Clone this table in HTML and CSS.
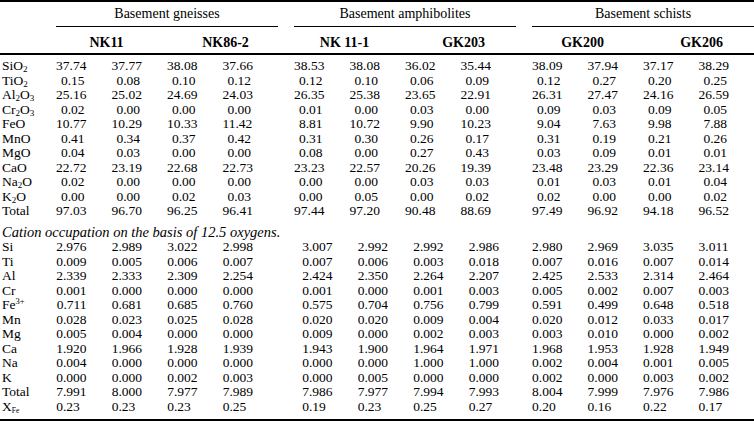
FILE: index.html
```html
<!DOCTYPE html>
<html>
<head>
<meta charset="utf-8">
<link rel="stylesheet" href="styles.css">
</head>
<body>
<table class="tbl">
<colgroup>
<col class="c-lab"><col class="c-d"><col class="c-d"><col class="c-d"><col class="c-d"><col class="c-gap"><col class="c-d"><col class="c-d"><col class="c-d"><col class="c-d"><col class="c-gap"><col class="c-d"><col class="c-d"><col class="c-d"><col class="c-d">
</colgroup>
<thead>
<tr class="grp"><th></th><th colspan="4" class="g">Basement gneisses</th><th></th><th colspan="4" class="g">Basement amphibolites</th><th></th><th colspan="4" class="g">Basement schists</th></tr>
<tr class="smp"><th></th><th colspan="2" class="s1">NK11</th><th colspan="2" class="s2">NK86-2</th><th></th><th colspan="2" class="s1">NK 11-1</th><th colspan="2" class="s2">GK203</th><th></th><th colspan="2" class="s1">GK200</th><th colspan="2" class="s2">GK206</th></tr>
</thead>
<tbody class="ox">
<tr class="first"><th class="lab">SiO<sub>2</sub></th><td>37.74</td><td>37.77</td><td>38.08</td><td>37.66</td><td class="sp"></td><td>38.53</td><td>38.08</td><td>36.02</td><td>35.44</td><td class="sp"></td><td>38.09</td><td>37.94</td><td>37.17</td><td>38.29</td></tr>
<tr><th class="lab">TiO<sub>2</sub></th><td>0.15</td><td>0.08</td><td>0.10</td><td>0.12</td><td class="sp"></td><td>0.12</td><td>0.10</td><td>0.06</td><td>0.09</td><td class="sp"></td><td>0.12</td><td>0.27</td><td>0.20</td><td>0.25</td></tr>
<tr><th class="lab">Al<sub>2</sub>O<sub>3</sub></th><td>25.16</td><td>25.02</td><td>24.69</td><td>24.03</td><td class="sp"></td><td>26.35</td><td>25.38</td><td>23.65</td><td>22.91</td><td class="sp"></td><td>26.31</td><td>27.47</td><td>24.16</td><td>26.59</td></tr>
<tr><th class="lab">Cr<sub>2</sub>O<sub>3</sub></th><td>0.02</td><td>0.00</td><td>0.00</td><td>0.00</td><td class="sp"></td><td>0.01</td><td>0.00</td><td>0.03</td><td>0.00</td><td class="sp"></td><td>0.09</td><td>0.03</td><td>0.09</td><td>0.05</td></tr>
<tr><th class="lab">FeO</th><td>10.77</td><td>10.29</td><td>10.33</td><td>11.42</td><td class="sp"></td><td>8.81</td><td>10.72</td><td>9.90</td><td>10.23</td><td class="sp"></td><td>9.04</td><td>7.63</td><td>9.98</td><td>7.88</td></tr>
<tr><th class="lab">MnO</th><td>0.41</td><td>0.34</td><td>0.37</td><td>0.42</td><td class="sp"></td><td>0.31</td><td>0.30</td><td>0.26</td><td>0.17</td><td class="sp"></td><td>0.31</td><td>0.19</td><td>0.21</td><td>0.26</td></tr>
<tr><th class="lab">MgO</th><td>0.04</td><td>0.03</td><td>0.00</td><td>0.00</td><td class="sp"></td><td>0.08</td><td>0.00</td><td>0.27</td><td>0.43</td><td class="sp"></td><td>0.03</td><td>0.09</td><td>0.01</td><td>0.01</td></tr>
<tr><th class="lab">CaO</th><td>22.72</td><td>23.19</td><td>22.68</td><td>22.73</td><td class="sp"></td><td>23.23</td><td>22.57</td><td>20.26</td><td>19.39</td><td class="sp"></td><td>23.48</td><td>23.29</td><td>22.36</td><td>23.14</td></tr>
<tr><th class="lab">Na<sub>2</sub>O</th><td>0.02</td><td>0.00</td><td>0.00</td><td>0.00</td><td class="sp"></td><td>0.00</td><td>0.00</td><td>0.03</td><td>0.03</td><td class="sp"></td><td>0.01</td><td>0.03</td><td>0.01</td><td>0.04</td></tr>
<tr><th class="lab">K<sub>2</sub>O</th><td>0.00</td><td>0.00</td><td>0.02</td><td>0.03</td><td class="sp"></td><td>0.00</td><td>0.05</td><td>0.00</td><td>0.02</td><td class="sp"></td><td>0.02</td><td>0.00</td><td>0.00</td><td>0.02</td></tr>
<tr><th class="lab">Total</th><td>97.03</td><td>96.70</td><td>96.25</td><td>96.41</td><td class="sp"></td><td>97.44</td><td>97.20</td><td>90.48</td><td>88.69</td><td class="sp"></td><td>97.49</td><td>96.92</td><td>94.18</td><td>96.52</td></tr>
</tbody>
<tbody class="cat">
<tr class="note"><td colspan="15">Cation occupation on the basis of 12.5 oxygens.</td></tr>
<tr class="first"><th class="lab">Si</th><td>2.976</td><td>2.989</td><td>3.022</td><td>2.998</td><td class="sp"></td><td>3.007</td><td>2.992</td><td>2.992</td><td>2.986</td><td class="sp"></td><td>2.980</td><td>2.969</td><td>3.035</td><td>3.011</td></tr>
<tr><th class="lab">Ti</th><td>0.009</td><td>0.005</td><td>0.006</td><td>0.007</td><td class="sp"></td><td>0.007</td><td>0.006</td><td>0.003</td><td>0.018</td><td class="sp"></td><td>0.007</td><td>0.016</td><td>0.007</td><td>0.014</td></tr>
<tr><th class="lab">Al</th><td>2.339</td><td>2.333</td><td>2.309</td><td>2.254</td><td class="sp"></td><td>2.424</td><td>2.350</td><td>2.264</td><td>2.207</td><td class="sp"></td><td>2.425</td><td>2.533</td><td>2.314</td><td>2.464</td></tr>
<tr><th class="lab">Cr</th><td>0.001</td><td>0.000</td><td>0.000</td><td>0.000</td><td class="sp"></td><td>0.001</td><td>0.000</td><td>0.001</td><td>0.003</td><td class="sp"></td><td>0.005</td><td>0.002</td><td>0.007</td><td>0.003</td></tr>
<tr><th class="lab">Fe<sup>3+</sup></th><td>0.711</td><td>0.681</td><td>0.685</td><td>0.760</td><td class="sp"></td><td>0.575</td><td>0.704</td><td>0.756</td><td>0.799</td><td class="sp"></td><td>0.591</td><td>0.499</td><td>0.648</td><td>0.518</td></tr>
<tr><th class="lab">Mn</th><td>0.028</td><td>0.023</td><td>0.025</td><td>0.028</td><td class="sp"></td><td>0.020</td><td>0.020</td><td>0.009</td><td>0.004</td><td class="sp"></td><td>0.020</td><td>0.012</td><td>0.033</td><td>0.017</td></tr>
<tr><th class="lab">Mg</th><td>0.005</td><td>0.004</td><td>0.000</td><td>0.000</td><td class="sp"></td><td>0.009</td><td>0.000</td><td>0.002</td><td>0.003</td><td class="sp"></td><td>0.003</td><td>0.010</td><td>0.000</td><td>0.002</td></tr>
<tr><th class="lab">Ca</th><td>1.920</td><td>1.966</td><td>1.928</td><td>1.939</td><td class="sp"></td><td>1.943</td><td>1.900</td><td>1.964</td><td>1.971</td><td class="sp"></td><td>1.968</td><td>1.953</td><td>1.928</td><td>1.949</td></tr>
<tr><th class="lab">Na</th><td>0.004</td><td>0.000</td><td>0.000</td><td>0.000</td><td class="sp"></td><td>0.000</td><td>0.000</td><td>1.000</td><td>1.000</td><td class="sp"></td><td>0.002</td><td>0.004</td><td>0.001</td><td>0.005</td></tr>
<tr><th class="lab">K</th><td>0.000</td><td>0.000</td><td>0.002</td><td>0.003</td><td class="sp"></td><td>0.000</td><td>0.005</td><td>0.000</td><td>0.000</td><td class="sp"></td><td>0.002</td><td>0.000</td><td>0.003</td><td>0.002</td></tr>
<tr><th class="lab">Total</th><td>7.991</td><td>8.000</td><td>7.977</td><td>7.989</td><td class="sp"></td><td>7.986</td><td>7.977</td><td>7.994</td><td>7.993</td><td class="sp"></td><td>8.004</td><td>7.999</td><td>7.976</td><td>7.986</td></tr>
<tr class="last xfe"><th class="lab">X<sub class="tiny">Fe</sub></th><td>0.23</td><td>0.23</td><td>0.23</td><td>0.25</td><td class="sp"></td><td>0.19</td><td>0.23</td><td>0.25</td><td>0.27</td><td class="sp"></td><td>0.20</td><td>0.16</td><td>0.22</td><td>0.17</td></tr>
</tbody>
</table>
</body>
</html>
```
FILE: styles.css
```css
html, body {
  margin: 0;
  padding: 0;
  background: #fff;
}
body {
  font-family: "Liberation Serif", "Times New Roman", serif;
  font-size: 13.5px;
  color: #000;
}
.tbl {
  width: 754px;
  border-collapse: collapse;
  table-layout: fixed;
  line-height: 14.5px;
  border-top: 2px solid #000;
  border-bottom: 2px solid #000;
}
.c-lab { width: 56px; }
.c-d { width: 55.5px; }
.c-gap { width: 16px; }
.tbl th, .tbl td {
  padding: 0;
  white-space: nowrap;
}
.grp th {
  font-weight: normal;
  font-size: 14px;
  text-align: center;
  padding: 5px 0 4px;
}
.grp .g {
  border-bottom: 1px solid #000;
}
.smp th {
  font-weight: bold;
  font-size: 14px;
  text-align: center;
  padding: 9px 0 3px;
  border-bottom: 2px solid #000;
}
.smp th.s1 {
  padding-right: 10px;
}
.smp th.s2 {
  padding-left: 6px;
}
.lab {
  text-align: left;
  font-weight: normal;
  padding-left: 2px !important;
}
.tbl tbody td {
  text-align: right;
  padding-right: 27px;
}
/* cation block: per-group alignment offsets */
.cat tr td:nth-child(-n+5) {
  padding-right: 25px;
}
.cat tr td:nth-child(n+7):nth-child(-n+10) {
  padding-right: 17px;
}
.cat tr.xfe td {
  padding-right: 33.75px;
}
.cat tr.xfe td:nth-child(-n+5) {
  padding-right: 31.75px;
}
.cat tr.xfe td:nth-child(n+7):nth-child(-n+10) {
  padding-right: 23.75px;
}
.tbl tbody td.sp {
  padding: 0;
}
.tbl tr.first th, .tbl tr.first td {
  padding-top: 4px;
}
.cat tr.first th, .cat tr.first td {
  padding-top: 1px;
}
.tbl tbody tr.note td {
  font-style: italic;
  font-size: 14.5px;
  text-align: left;
  padding: 6px 0 0 2px;
}
.tbl tr.last th, .tbl tr.last td {
  padding-bottom: 5px;
}
sub {
  font-size: 9px;
  line-height: 0;
  vertical-align: -2px;
}
sub.tiny {
  font-size: 7.5px;
}
sup {
  font-size: 8.5px;
  line-height: 0;
  vertical-align: 5px;
}
```
